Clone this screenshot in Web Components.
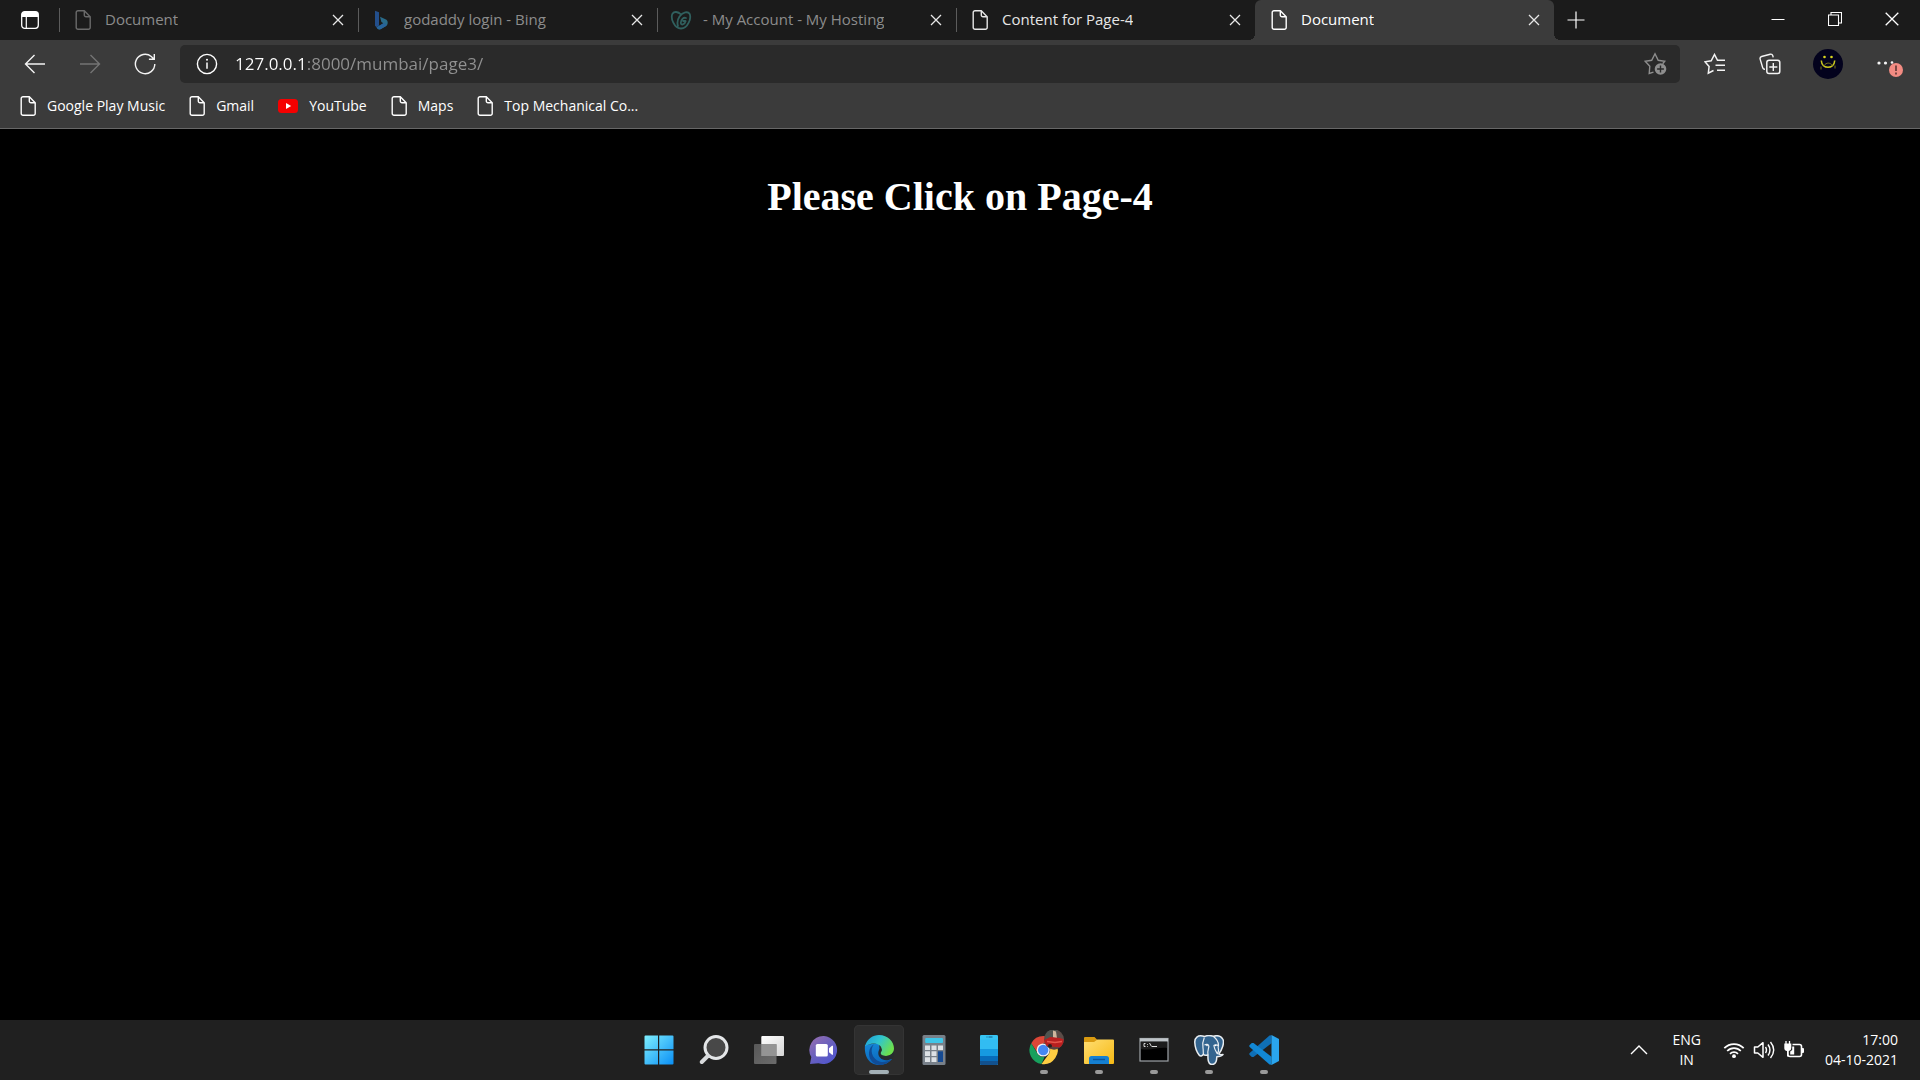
<!DOCTYPE html>
<html lang="en">
<head>
<meta charset="utf-8">
<title>Document</title>
<style>
  html, body { margin: 0; height: 100%; background: #000; }
  body { font-family: "Open Sans", "Noto Sans", sans-serif; color: #fff; overflow: hidden; }
</style>
</head>
<body>
<desktop-screen></desktop-screen>

<script>
const ICONS = {
  page: [16, 20, '<path d="M3 .8h6.3l5.9 5.9v10.8a1.8 1.8 0 0 1-1.8 1.8H3a1.8 1.8 0 0 1-1.8-1.8V2.600A1.800 1.800 0 0 1 3 .8z M9.300 .8v4.200a1.700 1.700 0 0 0 1.700 1.700h4.200" fill="none" stroke="currentColor" stroke-width="1.400"/>'],
  tabs: [18, 18, '<rect x=".7" y=".7" width="16.6" height="16.6" rx="3" fill="none" stroke="currentColor" stroke-width="1.300"/><path d="M.7 6V3.500A3 3 0 0 1 3.700 .7h10.600a3 3 0 0 1 3 3V6z" fill="currentColor"/><path d="M5.300 5v12" stroke="currentColor" stroke-width="1.200"/>'],
  close: [12, 12, '<path d="M1 1l10 10M11 1L1 11" stroke="currentColor" stroke-width="1.300"/>'],
  winclose: [14, 14, '<path d="M.7 .7l12.600 12.600M13.300 .7L.7 13.300" stroke="currentColor" stroke-width="1.300"/>'],
  min: [14, 14, '<path d="M.5 7.500h13" stroke="currentColor"/>'],
  restore: [14, 14, '<path d="M.5 3h10v10.500h-10zM3 3V.5h10.500v10.500h-3" fill="none" stroke="currentColor" stroke-width="1.100"/>'],
  plus: [18, 18, '<path d="M9 .5v17M.5 9h17" stroke="currentColor" stroke-width="1.200"/>'],
  bing: [16, 20, '<path d="M1 .7l4 1.500v13.300L2.600 17.300 1 15.800z" fill="#234f8c"/><path d="M6 6.800l6 2.600c2.200 1.200 2.400 4.600.2 6.600l-5.700 3.300c-1.800.5-3.300-.2-3.900-2l3.100-1.800 3.700-2.200-2-1.200z" fill="#296b8a"/><path d="M2.600 17.300l3.100-1.800 3.700-2.200c2 .1 3 1 3 2.500l-5.900 3.500c-1.800.5-3.300-.2-3.900-2z" fill="#27639b"/>'],
  godaddy: [22, 20, '<g transform="translate(1 1)" fill="none" stroke="#30605e" stroke-width="1.800" stroke-linecap="round" stroke-linejoin="round"><path d="M10 3.500C7 .3 3 .3 1.500 2.700-.7 7 3 17.500 10 17.500S20.700 7 18.500 2.700C17 .2 12 .8 8.500 5.500 6.500 8.500 6 12 7 15"/><path d="M15 7C12.500 6 9.800 8.500 9.800 11.800c0 2.700 3.900 2.200 4.900-1.800h-2.500"/></g>'],
  back: [22, 20, '<path d="M21 10H1.500M10.500 1L1.500 10l9 9" fill="none" stroke="currentColor" stroke-width="1.400"/>'],
  forward: [22, 20, '<path d="M1 10h19.500M11.500 1l9 9-9 9" fill="none" stroke="currentColor" stroke-width="1.400"/>'],
  reload: [22, 22, '<path d="M20.800 11a9.700 9.700 0 1 1-3.500-7.500l2.300 2.200M20.300 1v5.200h-5.400" fill="none" stroke="currentColor" stroke-width="1.400"/>'],
  info: [22, 22, '<circle cx="11" cy="11" r="9.600" fill="none" stroke="currentColor" stroke-width="1.400"/><path d="M11 9.500v6.300" stroke="currentColor" stroke-width="1.500"/><circle cx="11" cy="6.800" r="1" fill="currentColor"/>'],
  addfav: [24, 24, '<path d="M9.500 20.200l-4.300 1.300 .6-7.200L1.200 9.300l6.500-1L11 1.800l3.200 6.500 6.500.9-2 2.500" fill="none" stroke="currentColor" stroke-width="1.400"/><circle cx="16.500" cy="17" r="5.800" fill="currentColor"/><path d="M16.500 13.600v6.800M13.100 17h6.800" stroke="#2a2a2a" stroke-width="1.400"/>'],
  favs: [22, 22, '<path d="M9.500 17.500l-5.200 2.600 .8-6.500L1 8.800l6.200-1L10.500 1.500l3 5.800h7.500M13 12.300h8M13 17.300h8M11.500 12.300H13" fill="none" stroke="currentColor" stroke-width="1.500"/>'],
  collections: [22, 22, '<path d="M6 16.300c-1.300.1-2-.6-2.300-1.600L1.200 6.400c-.4-1.400.1-2.500 1.400-2.900l8.600-2.300c1.200-.3 2.200.3 2.600 1.500l.4 1.600" fill="none" stroke="currentColor" stroke-width="1.400"/><rect x="7.800" y="7.200" width="13" height="13.400" rx="2.300" fill="none" stroke="currentColor" stroke-width="1.500"/><path d="M14.300 10v8M10.300 14h8" stroke="currentColor" stroke-width="1.400"/>'],
  avatar: [30, 30, '<circle cx="15" cy="15" r="15" fill="#03021d"/><g fill="none" stroke="#c9c61e"><path d="M8.300 11.500c.4 9 13 9 13.400 0" stroke-width="1.600"/><path d="M11 16.500c2.500-3.200 6-3.200 8.500 0M8 17.500v3M22 16.500v3" stroke="#77751b"/></g><circle cx="11.500" cy="8" r="1.300" fill="#d9d51e"/><circle cx="18.500" cy="8" r="1.300" fill="#d9d51e"/>'],
  more: [28, 26, '<g fill="currentColor"><circle cx="4" cy="12" r="1.600"/><circle cx="10.500" cy="12" r="1.600"/><circle cx="17" cy="11.500" r="1.300"/></g><circle cx="21" cy="19" r="7" fill="#f28b82"/><path d="M21 14.500v5.500M21 21.500v2" stroke="#3b2220" stroke-width="1.300"/>'],
  youtube: [20, 20, '<rect x="0" y="3" width="20" height="14" rx="3.500" fill="#f50000"/><path d="M8 7l5.200 3L8 13z" fill="#fff"/>'],
  start: [30, 30, '<defs><linearGradient id="s" x2="1" y2="1"><stop stop-color="#7eefff"/><stop offset="1" stop-color="#0a8ff5"/></linearGradient></defs><path d="M1.500 .5H14v13.800H.5V1.500a1 1 0 0 1 1-1zM15.200 .5h13.300a1 1 0 0 1 1 1v12.800H15.200zM.5 15.500H14v14H1.500a1 1 0 0 1-1-1zM15.200 15.500h14.300v13a1 1 0 0 1-1 1H15.200z" fill="url(#s)"/>'],
  search: [30, 30, '<circle cx="17" cy="12.500" r="11" fill="#484848" stroke="#e4e6e8" stroke-width="3"/><path d="M8.800 21l-6 6" stroke="#d8dadc" stroke-width="4" stroke-linecap="round"/>'],
  tasks: [30, 30, '<defs><linearGradient id="t" x2="1" y2="1"><stop stop-color="#fff"/><stop offset="1" stop-color="#d5d5d5"/></linearGradient><linearGradient id="u" x2="1" y2="1"><stop stop-color="#5e5e5e"/><stop offset="1" stop-color="#747474"/></linearGradient></defs><rect x="7.300" y="1" width="22.700" height="20" rx="1" fill="url(#t)"/><rect x="0" y="9" width="22.500" height="20" rx="1" fill="url(#u)" opacity=".9"/><path d="M7.300 9h15.200v12H7.300z" fill="#949494"/>'],
  chat: [30, 30, '<defs><linearGradient id="c" x2=".8" y2="1"><stop stop-color="#9c6fae"/><stop offset=".5" stop-color="#6b61bd"/><stop offset="1" stop-color="#4f55cf"/></linearGradient></defs><path d="M15 1a14 14 0 1 1-5.500 27.200L1 29l1.300-7A14 14 0 0 1 15 1z" fill="url(#c)"/><rect x="6.800" y="9" width="12" height="12.500" rx="1.600" fill="#fff"/><path d="M20 13.300l3-2.500h1v9h-1l-3-2.500z" fill="#fff"/>'],
  edge: [30, 30, '<defs><linearGradient id="e" x2="1" y2=".5"><stop stop-color="#1d9bd8"/><stop offset=".5" stop-color="#30c5cf"/><stop offset="1" stop-color="#6ce04e"/></linearGradient><linearGradient id="f" x2=".3" y2="1"><stop stop-color="#1689d8"/><stop offset="1" stop-color="#0b68bd"/></linearGradient></defs><path d="M1 10C0 20 4 30 15.500 30 20.500 30 25 27.800 28 24L16 20l-1-12z" fill="url(#f)"/><path d="M1 11C3.500 3.500 8.800 0 15 0c9 0 15 6.500 15 13.500 0 4.500-3.500 7.500-8 7.500-3.500 0-5.500-1.200-5.500-2.800 0-1 1.200-1.600 1.200-3.700 0-3.500-3.600-6-7.700-6-4 0-7 1.600-9 2.500z" fill="url(#e)"/><path d="M10 9.200c-4.500 5-2.500 14.500 5.500 17.300 4.500 1.500 9-.3 12-2.500C25 27.800 20.500 30 15.500 30 8.500 29.500 4.500 23.500 5 17.500c.3-3.600 2.300-6.800 5-8.300z" fill="#104c96"/><path d="M16.500 18.200c0 1.600 2 2.800 5.500 2.800 2.600 0 4.700-1 6.100-2.500l1.900-2v4.500l-2.200 2.800c-3.300 2-9 2.500-12-1.500-2.300-3-1.800-7 .7-9.300 1 .5 1.200 1.200 1.200 2 0 1.400-1.200 2-1.200 3.200z" fill="#262c30"/>'],
  calc: [30, 30, '<rect x="3.500" width="23" height="30" rx="1.500" fill="#788089"/><rect x="6.200" y="3" width="17.800" height="5" rx="1" fill="#3fc6e8"/><g fill="#dde1e5"><path d="M6 10.500h5v4.500H6zM12.500 10.500h5v4.500h-5zM19 10.500h5v4.500h-5zM6 16.300h5v4.700H6zM12.500 16.300h5v4.700h-5zM6 22.300h5V27H6zM12.500 22.300h5V27h-5z"/></g><path d="M19 16.300h5V27h-5z" fill="#164a92"/>'],
  phone: [30, 30, '<rect x="6" width="18" height="30" rx="1.300" fill="#37c5f4"/><path d="M6 4.500h18V14H6z" fill="#32bcf2"/><path d="M6 14h18v7H6z" fill="#169ae0"/><path d="M6 21h18v5H6z" fill="#076cba"/><path d="M6 26h18v2.700A1.300 1.300 0 0 1 22.700 30H7.300A1.300 1.300 0 0 1 6 28.700z" fill="#12518e"/><path d="M12.500 2h1M14.500 2h4" stroke="#175d86" stroke-width="1.200"/>'],
  chrome: [40, 40, '<g transform="translate(5 6)"><path d="M2.200 7.200A14 14 0 0 1 26.700 7H14.500L8 16z" fill="#dc4637"/><path d="M2.200 7.200L8.500 17.500a7 7 0 0 0 7 3.500l-3 7A14 14 0 0 1 2.200 7.200z" fill="#17a05d"/><path d="M14.500 7h12.200a14 14 0 0 1-14.200 21l7.700-10.500A7 7 0 0 0 14.500 7z" fill="#fecd42"/><circle cx="14.200" cy="14" r="6.600" fill="#f2f2f2"/><circle cx="14.200" cy="14" r="5.200" fill="#4587f3"/></g><g transform="translate(1 -3)"><circle cx="29" cy="12.500" r="10" fill="#5b4c47"/><path d="M20.500 7a10 10 0 0 1 12-4L31 11l-10 2z" fill="#4f5450"/><path d="M28 3.500l3 1 1 7-4-1z" fill="#cfb79e"/><path d="M19.200 13l6-3 10 1 3.500 1.500a10 10 0 0 1-4 8l-13-1.500a10 10 0 0 1-2.500-6z" fill="#b82020"/><path d="M22 14.500l8 1 7-1" stroke="#e5564a" fill="none" stroke-width="1.500"/><circle cx="25" cy="19" r="2" fill="#282222"/><path d="M24 20.500c3.500 2.500 7 2.500 10 0z" fill="#5a4440"/></g>'],
  folder: [30, 30, '<defs><linearGradient id="g" x2="1" y2="1"><stop stop-color="#ffde72"/><stop offset="1" stop-color="#f6b914"/></linearGradient></defs><path d="M1 2h9.500l3 3H23v6H0V3a1 1 0 0 1 1-1z" fill="#d99a10"/><path d="M0 7h10l3.500-2.500H29a1 1 0 0 1 1 1V28a1 1 0 0 1-1 1H1a1 1 0 0 1-1-1z" fill="url(#g)"/><path d="M5 29v-5.500a2.500 2.500 0 0 1 2.500-2.500h15a2.500 2.500 0 0 1 2.500 2.500V29z" fill="#1580d2"/><path d="M9 24.500h12" stroke="#0b549b" stroke-width="1.400"/>'],
  cmd: [30, 30, '<rect x="1" y="3.500" width="28" height="22.500" fill="#000" stroke="#9fa4a8" stroke-width="1.200"/><path d="M1 3.500h28v3H1z" fill="#bec4c8"/><path d="M2 14c10 2 17-2 26-1V7H2z" fill="#1c1c1c"/><path d="M6.500 8.500H5v3h1.500M8.500 9v.8M8.500 11v.7M10.500 8l2 3.500M13 11.500h5" stroke="#ddd" fill="none"/>'],
  pg: [30, 30, '<path d="M8.500 1C4 .2 .5 2.500 .8 7.500c.2 4 2 9.500 4.300 12.500 1.400 1.800 3 1 4.300-.8 1 1.300 3 1.300 4.600.8-.2 3.500-.2 9.500 4 9.500 4.500 0 4.800-5 4.800-7.800 2.800 0 5-.7 6.200-2.200-1.700.2-3.500.2-4.200-.5C28 15 30.500 8 29 4.500 27 .8 23 .2 19.500 1.200 16 .4 12.500.5 11 1.500z" fill="#33648f" stroke="#e8edf1" stroke-width="1.500" stroke-linejoin="round"/><path d="M10.300 2.500c-1.700 4-2 7-1.300 10.500.5 2.700 0 4.500.5 6.300M10.500 10c2-1 4-.8 4.300 1 .3 2.500-1.800 4.500-.8 9M19.500 1.500c3 2.300 5 6 5 9-.5 1-.5 2.500 0 4 .3 1.500-.5 3-1 4.500M24 10.500c-1.500-1-4-.7-4.300.5M20 11c.5 4 2.500 6 3.500 8" fill="none" stroke="#e8edf1" stroke-width="1.200"/><circle cx="13" cy="10.500" r=".8" fill="#fff"/><circle cx="21.500" cy="10.500" r=".8" fill="#fff"/>'],
  vscode: [30, 30, '<path d="M22.500 .3v7.900L4.500 22 2.800 22 .4 19.800v-1.500L20.500 .4z" fill="#0f6fb6"/><path d="M22.500 29.700v-7.900L4.500 8 2.800 8 .4 10.200v1.500L20.500 29.600z" fill="#1288d5"/><path d="M22.500 0L30 4v22l-7.500 4c-.4 0 0-.5 0-1.500z" fill="#2aa5ee"/>'],
  up: [18, 10, '<path d="M1 9l8-8 8 8" fill="none" stroke="currentColor" stroke-width="1.400"/>'],
  wifi: [22, 20, '<g fill="none" stroke="currentColor" stroke-width="1.700"><path d="M1.300 8.200a13.500 13.500 0 0 1 19.400 0"/><path d="M4.200 11a9.500 9.500 0 0 1 13.600 0"/><path d="M7 13.800a5.600 5.600 0 0 1 8 0"/></g><circle cx="11" cy="16.200" r="1.900" fill="currentColor"/>'],
  sound: [22, 20, '<path d="M1.500 7h3.300L10 2.700v14.600L4.800 13H1.500z" fill="none" stroke="currentColor" stroke-width="1.500" stroke-linejoin="round"/><path d="M12.500 7c1.300 2 1.300 4 0 6M15 4.500c2.500 3.500 2.500 7.500 0 11M17.500 2c4 5 4 11 0 16" fill="none" stroke="currentColor" stroke-width="1.400"/>'],
  battery: [22, 20, '<path d="M9.500 4.500h7a2 2 0 0 1 2 2v8a2 2 0 0 1-2 2H7a2 2 0 0 1-2-1.500" fill="none" stroke="currentColor" stroke-width="1.600"/><path d="M18.500 8h1.500a1 1 0 0 1 1 1v3a1 1 0 0 1-1 1h-1.500zM1.300 3.500h7V8a3 3 0 0 1-2.500 3v5.500H4V11A3 3 0 0 1 1.300 8z" fill="currentColor"/><path d="M3 1v3M6.500 1v3" stroke="currentColor" stroke-width="1.300"/><path d="M7.200 11.500l2-1.500V6.500h2V14.500h-4z" fill="currentColor"/>']
};

function define(name, css, html, extra) {
  const template = document.createElement('template');
  template.innerHTML = `<style>*{box-sizing:border-box}button{margin:0;padding:0;border:0;background:none;color:inherit;font:inherit;display:flex;align-items:center;justify-content:center}${css}</style>${html}`;
  customElements.define(name, class extends HTMLElement {
    constructor() {
      super();
      this.attachShadow({ mode: 'open' }).append(template.content.cloneNode(true));
    }
    connectedCallback() { if (extra) extra(this, this.shadowRoot); }
  });
}

define('ui-icon', ':host{display:flex;justify-content:center;flex:none}span,svg{display:block}', '<span></span>', (host, root) => {
  const [w, h, art] = ICONS[host.getAttribute('name')];
  root.querySelector('span').innerHTML = `<svg width="${w}" height="${h}" viewBox="0 0 ${w} ${h}" aria-hidden="true">${art}</svg>`;
});

define('browser-tab', `
  :host{display:flex;flex:0 1 299px;min-width:0;align-items:center;position:relative;color:#8c8c8c;font-size:15px;line-height:20px}
  :host([loaded]){color:#e6e6e6}
  :host([active]){color:#fff;background:#3b3b3b;border-radius:6px 6px 0 0}
  :host([active])::before,:host([active])::after{content:"";position:absolute;bottom:0;width:6px;height:6px}
  :host([active])::before{right:100%;background:radial-gradient(circle at 0 0,transparent 6px,#3b3b3b 6px)}
  :host([active])::after{left:100%;background:radial-gradient(circle at 100% 0,transparent 6px,#3b3b3b 6px)}
  .rule{width:1px;height:24px;background:#5c5c5c}
  :host([active]) .rule{background:none}
  .title{flex:1;min-width:0;height:40px;justify-content:flex-start;padding-left:12px;gap:11px}
  ::slotted(ui-icon){width:22px}
  .label{overflow:hidden;white-space:nowrap;text-overflow:ellipsis;padding-bottom:2px}
  .close{width:40px;height:40px;color:#e8e8e8}
`, '<span class="rule"></span><button class="title" role="tab"><slot name="icon"></slot><span class="label"><slot></slot></span></button><button class="close" aria-label="Close tab"><ui-icon name="close"></ui-icon></button>');

define('tab-strip', `
  :host{display:flex;height:40px;background:#1b1b1b;color:#fff}
  .menu{flex:none;width:59px;height:40px}
  .tabs{display:flex;flex:0 1 1495px;min-width:0}
  .new{width:43px;height:40px;flex:none}
  .window{display:flex;margin-left:auto}
  .window button{width:57px;height:38px}
`, `
  <button class="menu" aria-label="Tab actions"><ui-icon name="tabs"></ui-icon></button>
  <div class="tabs" role="tablist"><slot></slot></div>
  <button class="new" aria-label="New tab"><ui-icon name="plus"></ui-icon></button>
  <div class="window">
    <button aria-label="Minimize"><ui-icon name="min"></ui-icon></button>
    <button aria-label="Restore"><ui-icon name="restore"></ui-icon></button>
    <button aria-label="Close"><ui-icon name="winclose"></ui-icon></button>
  </div>`);

define('address-bar', `
  :host{display:flex;flex:1;height:38px;align-items:center;background:#2a2a2a;border-radius:5px;padding:0 12px 0 16px;color:#fff}
  label{display:flex;flex:1;align-items:center;gap:17px}
  input{flex:1;min-width:0;height:38px;padding:0 0 2px;border:0;outline:0;font:inherit;font-size:17px;color:#919191;
    background:linear-gradient(90deg,#fff 72px,#919191 72px);-webkit-background-clip:text;background-clip:text;-webkit-text-fill-color:transparent}
  button{color:#8e8e8e}
`, `
  <label><ui-icon name="info"></ui-icon><input type="text" aria-label="Address" value="127.0.0.1:8000/mumbai/page3/" spellcheck="false"></label>
  <button aria-label="Add to favorites"><ui-icon name="addfav"></ui-icon></button>`);

define('tool-bar', `
  :host{display:flex;align-items:center;height:48px;padding-left:7px;background:#3b3b3b;color:#f4f4f4}
  .nav{display:flex;margin-right:8px}
  button{width:55px;height:38px}
  .nav button:disabled{color:#747474}
  .actions{display:flex;margin:0 1px 0 7px}
  .actions .wide{width:61px}
`, `
  <nav class="nav">
    <button aria-label="Back"><ui-icon name="back"></ui-icon></button>
    <button aria-label="Forward" disabled><ui-icon name="forward"></ui-icon></button>
    <button aria-label="Refresh"><ui-icon name="reload"></ui-icon></button>
  </nav>
  <address-bar></address-bar>
  <div class="actions">
    <button aria-label="Favorites"><ui-icon name="favs"></ui-icon></button>
    <button aria-label="Collections"><ui-icon name="collections"></ui-icon></button>
    <button class="wide" aria-label="Profile"><ui-icon name="avatar"></ui-icon></button>
    <button class="wide" aria-label="Settings and more"><ui-icon name="more"></ui-icon></button>
  </div>`);

define('bookmark-link', `
  :host{display:block}
  a{display:flex;align-items:center;gap:11px;color:#fff;text-decoration:none;font-size:14px;line-height:20px;white-space:nowrap}
`, '<a href="#"><slot name="icon"></slot><span><slot></slot></span></a>');

define('bookmark-bar', ':host{display:flex;align-items:center;gap:24px;height:41px;padding:0 20px 5px;background:#3b3b3b;border-bottom:1px solid #676767}', '<slot></slot>');

define('web-content', `
  :host{display:block;flex:1;background:#000;padding:45px 10px 0}
  h1{margin:0;font:bold 40px/46px "Liberation Serif","Times New Roman",serif;text-align:center;color:#fff}
`, '<h1><slot></slot></h1>');

define('task-button', `
  :host{display:block}
  button{position:relative;width:50px;height:50px;border-radius:5px}
  :host([active]) button{background:#2d2d2d;box-shadow:inset 0 0 0 1px #343434}
  :host([running]) button::after{content:"";position:absolute;bottom:1px;left:50%;width:8px;height:4px;margin-left:-4px;border-radius:2px;background:#9a9a9a}
  :host([active]) button::after{width:20px;margin-left:-10px;background:#a3b0b6}
`, '<button><slot></slot></button>', (host, root) => {
  root.querySelector('button').setAttribute('aria-label', host.getAttribute('label'));
});

define('task-bar', `
  :host{display:grid;grid-template-columns:1fr auto 1fr;align-items:center;height:60px;padding-left:2px;box-sizing:border-box;background:#202020;color:#fff;font-size:14px;line-height:20px}
  .apps{grid-column:2;display:flex;gap:5px}
  .tray{display:flex;align-items:center;justify-content:flex-end;padding-right:22px}
  .up{width:38px;height:50px;margin-right:14px}
  .lang{display:block;text-align:center;margin-right:22px}
  .status{gap:8px;height:50px;margin-right:20px}
  .clock{display:block;text-align:right}
  .lang span,.clock span{display:block}
`, `
  <div class="apps"><slot></slot></div>
  <div class="tray">
    <button class="up" aria-label="Show hidden icons"><ui-icon name="up"></ui-icon></button>
    <button class="lang"><span>ENG</span><span>IN</span></button>
    <button class="status" aria-label="Network, sound, battery"><ui-icon name="wifi"></ui-icon><ui-icon name="sound"></ui-icon><ui-icon name="battery"></ui-icon></button>
    <button class="clock"><span>17:00</span><span>04-10-2021</span></button>
  </div>`);

define('desktop-screen', ':host{display:flex;flex-direction:column;min-height:100vh}.dim{opacity:.7}', `
  <tab-strip>
    <browser-tab><ui-icon class="dim" slot="icon" name="page"></ui-icon>Document</browser-tab>
    <browser-tab><ui-icon slot="icon" name="bing"></ui-icon>godaddy login - Bing</browser-tab>
    <browser-tab><ui-icon slot="icon" name="godaddy"></ui-icon>- My Account - My Hosting</browser-tab>
    <browser-tab loaded><ui-icon slot="icon" name="page"></ui-icon>Content for Page-4</browser-tab>
    <browser-tab active><ui-icon slot="icon" name="page"></ui-icon>Document</browser-tab>
  </tab-strip>
  <tool-bar></tool-bar>
  <bookmark-bar>
    <bookmark-link><ui-icon slot="icon" name="page"></ui-icon>Google Play Music</bookmark-link>
    <bookmark-link><ui-icon slot="icon" name="page"></ui-icon>Gmail</bookmark-link>
    <bookmark-link><ui-icon slot="icon" name="youtube"></ui-icon>YouTube</bookmark-link>
    <bookmark-link><ui-icon slot="icon" name="page"></ui-icon>Maps</bookmark-link>
    <bookmark-link><ui-icon slot="icon" name="page"></ui-icon>Top Mechanical Co...</bookmark-link>
  </bookmark-bar>
  <web-content>Please Click on Page-4</web-content>
  <task-bar>
    <task-button label="Start"><ui-icon name="start"></ui-icon></task-button>
    <task-button label="Search"><ui-icon name="search"></ui-icon></task-button>
    <task-button label="Task view"><ui-icon name="tasks"></ui-icon></task-button>
    <task-button label="Chat"><ui-icon name="chat"></ui-icon></task-button>
    <task-button label="Edge" active running><ui-icon name="edge"></ui-icon></task-button>
    <task-button label="Calculator"><ui-icon name="calc"></ui-icon></task-button>
    <task-button label="Your Phone"><ui-icon name="phone"></ui-icon></task-button>
    <task-button label="Chrome" running><ui-icon name="chrome"></ui-icon></task-button>
    <task-button label="File Explorer" running><ui-icon name="folder"></ui-icon></task-button>
    <task-button label="Command Prompt" running><ui-icon name="cmd"></ui-icon></task-button>
    <task-button label="pgAdmin" running><ui-icon name="pg"></ui-icon></task-button>
    <task-button label="Visual Studio Code" running><ui-icon name="vscode"></ui-icon></task-button>
  </task-bar>`);
</script>
</body>
</html>
